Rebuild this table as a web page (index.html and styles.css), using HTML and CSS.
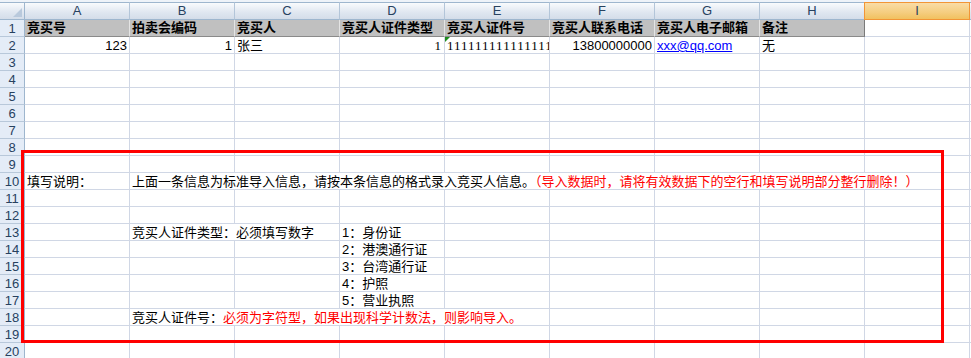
FILE: index.html
```html
<!DOCTYPE html>
<html lang="zh-CN">
<head>
<meta charset="utf-8">
<title>竞买人导入模板</title>
<link rel="stylesheet" href="styles.css">
</head>
<body>
<div class="sheet">
  <div class="colheads">
    <div class="corner"><svg class="corner-tri" width="9" height="9" viewBox="0 0 9 9"><polygon points="9,0 9,9 0,9" fill="#b9c9dc"/></svg></div>
    <div class="ch">A</div>
    <div class="ch">B</div>
    <div class="ch">C</div>
    <div class="ch">D</div>
    <div class="ch">E</div>
    <div class="ch">F</div>
    <div class="ch">G</div>
    <div class="ch">H</div>
    <div class="ch sel">I</div>
    <div class="ch last"></div>
  </div>
  <div class="main">
    <div class="rowheads">
      <div class="rh">1</div><div class="rh">2</div><div class="rh">3</div><div class="rh">4</div>
      <div class="rh">5</div><div class="rh">6</div><div class="rh">7</div><div class="rh">8</div>
      <div class="rh">9</div><div class="rh">10</div><div class="rh">11</div><div class="rh">12</div>
      <div class="rh">13</div><div class="rh">14</div><div class="rh">15</div><div class="rh">16</div>
      <div class="rh">17</div><div class="rh">18</div><div class="rh">19</div><div class="rh">20</div>
    </div>
    <div class="cells">
      <div class="row">
        <div class="cell hd">竞买号</div>
        <div class="cell hd">拍卖会编码</div>
        <div class="cell hd">竞买人</div>
        <div class="cell hd">竞买人证件类型</div>
        <div class="cell hd">竞买人证件号</div>
        <div class="cell hd">竞买人联系电话</div>
        <div class="cell hd">竞买人电子邮箱</div>
        <div class="cell hd hd-last">备注</div>
      </div>
      <div class="row">
        <div class="cell num">123</div>
        <div class="cell num">1</div>
        <div class="cell">张三</div>
        <div class="cell num serif">1</div>
        <div class="cell serif textnum">111111111111111</div>
        <div class="cell num">13800000000</div>
        <div class="cell"><span class="link">xxx@qq.com</span></div>
        <div class="cell">无</div>
      </div>
      <div class="row"></div>
      <div class="row"></div>
      <div class="row"></div>
      <div class="row"></div>
      <div class="row"></div>
      <div class="row"></div>
      <div class="row"></div>
      <div class="row">
        <div class="cell">填写说明：</div>
        <div class="cell span-b-i">上面一条信息为标准导入信息，请按本条信息的格式录入竞买人信息。<span class="red">（导入数据时，请将有效数据下的空行和填写说明部分整行删除！）</span></div>
      </div>
      <div class="row"></div>
      <div class="row"></div>
      <div class="row">
        <div class="cell span-b-c">竞买人证件类型：必须填写数字</div>
        <div class="cell">1：身份证</div>
      </div>
      <div class="row"><div class="cell col-d">2：港澳通行证</div></div>
      <div class="row"><div class="cell col-d">3：台湾通行证</div></div>
      <div class="row"><div class="cell col-d">4：护照</div></div>
      <div class="row"><div class="cell col-d">5：营业执照</div></div>
      <div class="row">
        <div class="cell span-b-e">竞买人证件号：<span class="red">必须为字符型，如果出现科学计数法，则影响导入。</span></div>
      </div>
      <div class="row"></div>
      <div class="row"></div>
    </div>
  </div>
  <div class="frame"></div>
</div>
</body>
</html>
```
FILE: styles.css
```css
html, body {
  margin: 0;
  padding: 0;
  background: #ffffff;
}

body {
  width: 971px;
  height: 358px;
  overflow: hidden;
  font-family: "Liberation Sans", "Noto Sans CJK SC", sans-serif;
  font-size: 13px;
  color: #000;
}

.sheet {
  position: relative;
  width: 971px;
  height: 358px;
  overflow: hidden;
}

/* column headers */
.colheads {
  display: grid;
  grid-template-columns: 25px repeat(9, 105px) 1fr;
  height: 20px;
  box-sizing: border-box;
  padding-top: 2px;
  background: #eef3f9;
}

.corner,
.ch {
  box-sizing: border-box;
  height: 18px;
  border-top: 1px solid #9eb6ce;
  border-right: 1px solid #b3c5d9;
  border-bottom: 1px solid #9eb6ce;
  background: linear-gradient(#f9fbfd, #dfe6f0 60%, #d4dde9);
}

.corner {
  position: relative;
  border-right-color: #9eb6ce;
}

.corner-tri {
  position: absolute;
  right: 2px;
  bottom: 2px;
}

.ch {
  text-align: center;
  line-height: 16px;
  color: #27415f;
}

.ch.sel {
  background: linear-gradient(#f9dca6, #f5cd7f 60%, #f1c15f);
  border-color: #f29536;
  border-left: 1px solid #f29536;
  margin-left: -1px;
}

.ch.last {
  border-right: none;
}

/* body */
.main {
  display: flex;
}

.rowheads {
  flex: none;
  width: 25px;
}

.rh {
  box-sizing: border-box;
  height: 17px;
  border-right: 1px solid #9eb6ce;
  border-bottom: 1px solid #b8c8da;
  background: #e4ecf7;
  text-align: center;
  line-height: 16px;
  padding-top: 1px;
  color: #27415f;
}

.cells {
  flex: 1;
  background-image:
    repeating-linear-gradient(90deg, transparent 0 104px, #d0d7e5 104px 105px),
    repeating-linear-gradient(180deg, transparent 0 16px, #d0d7e5 16px 17px);
}

.row {
  display: grid;
  grid-template-columns: repeat(9, 105px) 1fr;
  height: 17px;
}

.cell {
  position: relative;
  box-sizing: border-box;
  height: 17px;
  padding: 1px 2px 0;
  line-height: 16px;
  white-space: nowrap;
  overflow: hidden;
  background: #ffffff;
  border-right: 1px solid #d0d7e5;
  border-bottom: 1px solid #d0d7e5;
}

.hd {
  background: #c0c0c0;
  font-weight: bold;
  padding-top: 0;
  line-height: 15px;
  border-right-color: #e4e4e4;
  border-bottom-color: #8a8a8a;
}

.hd-last {
  border-right-color: #7a7a7a;
}

.num {
  text-align: right;
}

.serif {
  font-family: "Liberation Serif", "Noto Sans CJK SC", serif;
  letter-spacing: 1px;
}

.textnum::before {
  content: "";
  position: absolute;
  left: 0;
  top: 0;
  border-top: 5px solid #1e8c1e;
  border-right: 5px solid transparent;
}

.link {
  color: #0000ff;
  text-decoration: underline;
}

.red {
  color: #ff0000;
}

.span-b-i {
  grid-column: 2 / 10;
}

.span-b-c {
  grid-column: 2 / 4;
}

.span-b-e {
  grid-column: 2 / 6;
}

.col-d {
  grid-column: 4 / 5;
}

/* red annotation frame drawn over the sheet */
.frame {
  position: absolute;
  left: 21px;
  top: 150px;
  width: 923px;
  height: 193px;
  box-sizing: border-box;
  border: 3px solid #ff0000;
}
```
